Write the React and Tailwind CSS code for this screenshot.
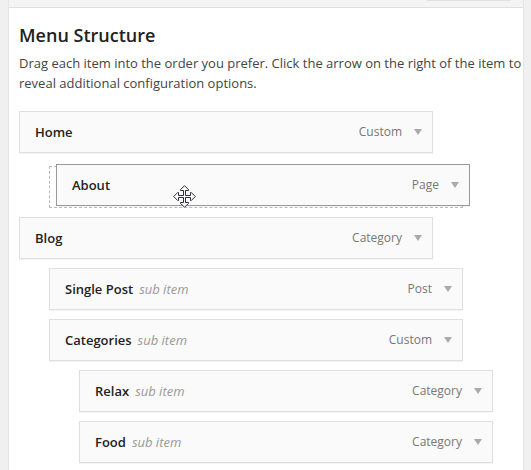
import { useState } from "react";

const items = [
  { id: 1, title: "Home", type: "Custom", depth: 0 },
  { id: 2, title: "About", type: "Page", depth: 1, dragging: true },
  { id: 3, title: "Blog", type: "Category", depth: 0 },
  { id: 4, title: "Single Post", type: "Post", depth: 1 },
  { id: 5, title: "Categories", type: "Custom", depth: 1 },
  { id: 6, title: "Relax", type: "Category", depth: 2 },
  { id: 7, title: "Food", type: "Category", depth: 2 },
];

const indents = ["ml-0", "ml-[30px]", "ml-[60px]"];

function MoveCursor() {
  return (
    <svg
      className="absolute left-[117px] top-[21px] size-[23px]"
      viewBox="0 0 23 23"
      aria-hidden="true"
    >
      <path
        d="M11.5 .7 15.5 4.7V5.5H12.5V10.5H17.5V7.5H18.3L22.3 11.5 18.3 15.5H17.5V12.5H12.5V17.5H15.5V18.3L11.5 22.3 7.5 18.3V17.5H10.5V12.5H5.5V15.5H4.7L.7 11.5 4.7 7.5H5.5V10.5H10.5V5.5H7.5V4.7Z"
        fill="#fff"
        stroke="#2b2b3b"
      />
    </svg>
  );
}

function MenuItem({ item, open, onToggle }) {
  const border = item.dragging ? "border-[#999]" : "border-[#dfdfdf]";

  return (
    <div
      className={`flex h-[42px] items-center justify-between border bg-[#fafafa] pl-[15px] pr-[9px] text-[13px] leading-5 shadow-[0_1px_1px_rgba(0,0,0,0.04)] ${border}`}
    >
      <span className="flex gap-1.5">
        <span className="font-semibold text-[#222]">{item.title}</span>
        {item.depth > 0 && !item.dragging && (
          <span className="italic text-[#999]">sub item</span>
        )}
      </span>
      <span className="flex items-center gap-[11px] text-[#777]">
        <span className="text-xs leading-5">{item.type}</span>
        <button
          type="button"
          aria-label={`Edit ${item.title}`}
          aria-expanded={open}
          onClick={onToggle}
          className="flex size-2.5 items-center justify-center"
        >
          <svg className="h-1.5 w-2" viewBox="0 0 8 6" fill="#aaa">
            <path d="M0 0H8L4 6Z" />
          </svg>
        </button>
      </span>
    </div>
  );
}

export default function App() {
  const [openId, setOpenId] = useState(null);

  return (
    <div className="flex min-h-screen bg-[#f0f0f0] pl-2 pr-[7px] font-['Open_Sans',sans-serif]">
      <main className="flex flex-1 flex-col border-x border-[#e5e5e5] bg-white">
        {/* Bottom edge of the toolbar */}
        <header className="flex h-2 justify-end border-b border-[#dfdfdf] bg-[#f4f4f4] pr-3">
          <span className="h-px w-[84px] bg-[#e0e0e0]" />
        </header>

        <section className="px-2.5 pt-[15px]">
          <h1 className="text-lg leading-6 font-semibold text-[#222]">
            Menu Structure
          </h1>
          <p className="mt-1.5 -mr-2.5 text-[13px] leading-5 text-[#444]">
            Drag each item into the order you prefer. Click the arrow on the
            right of the item to reveal additional configuration options.
          </p>

          <ul className="mt-[18px] flex flex-col gap-[9px]">
            {items.map((item) => {
              const row = (
                <MenuItem
                  item={item}
                  open={openId === item.id}
                  onToggle={() =>
                    setOpenId(openId === item.id ? null : item.id)
                  }
                />
              );
              return (
                <li
                  key={item.id}
                  className={`max-w-[414px] ${indents[item.depth]}`}
                >
                  {item.dragging ? (
                    // Drop placeholder with the lifted item over it
                    <div className="relative mt-1 h-[42px] border border-dashed border-[#bbb]">
                      <div className="absolute -top-[3px] left-1.5 w-full min-w-[calc(100%+2px)]">
                        {row}
                        <MoveCursor />
                      </div>
                    </div>
                  ) : (
                    row
                  )}
                </li>
              );
            })}
          </ul>
        </section>
      </main>
    </div>
  );
}
